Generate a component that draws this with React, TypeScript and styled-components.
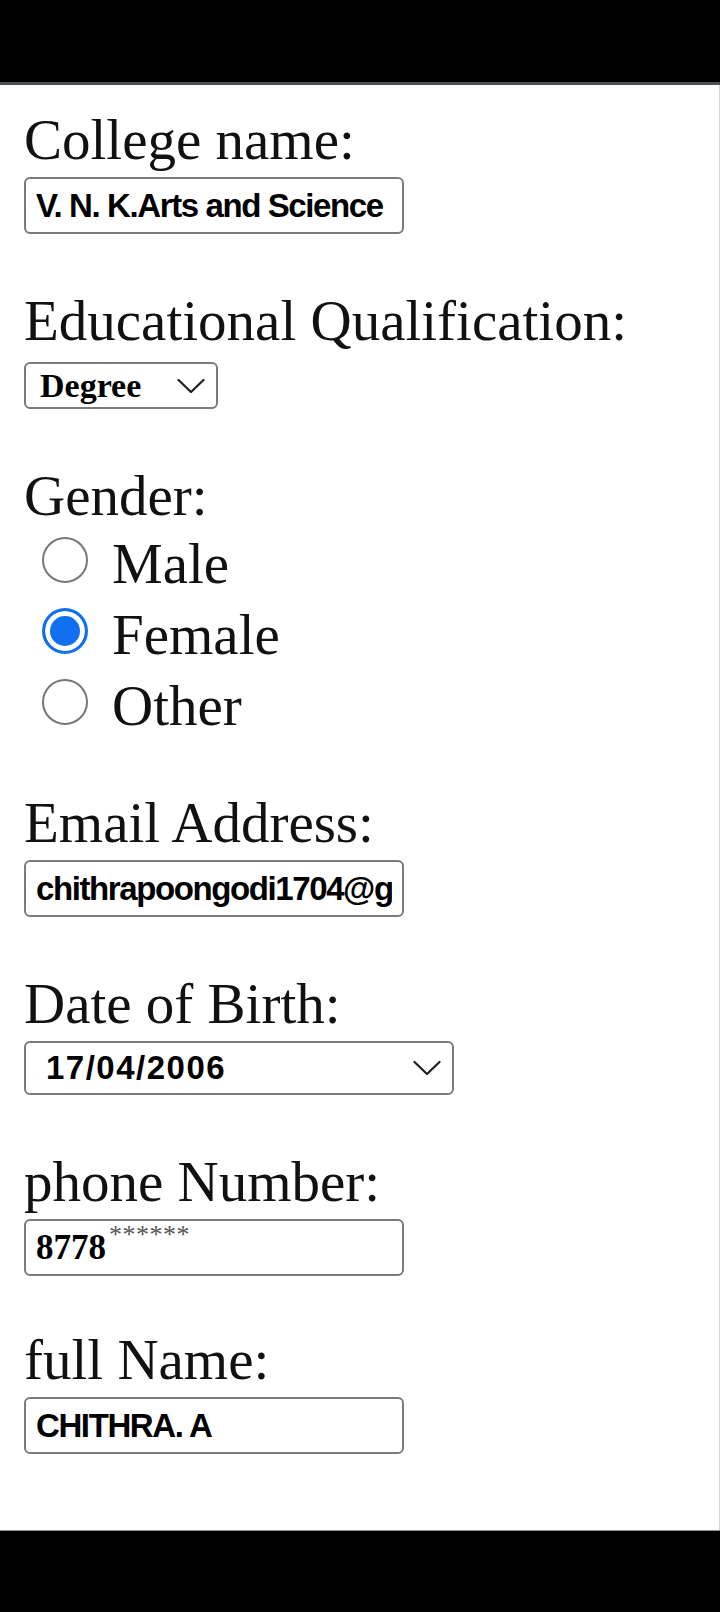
import React from "react";
import styled, { createGlobalStyle, css } from "styled-components";

const GlobalStyle = createGlobalStyle`
  html, body { margin: 0; padding: 0; background: #fff; }
  body { font-family: "Liberation Serif", serif; color: #111; }
  * { box-sizing: border-box; }
`;

const Screen = styled.div`
  display: flex;
  flex-direction: column;
  width: 720px;
  height: 1612px;
  overflow: hidden;
`;

const StatusBar = styled.div`
  flex: none;
  height: 85px;
  background: #000;
  border-bottom: 3px solid #4b4f59;
`;

const NavBar = styled.div`
  flex: none;
  height: 82px;
  background: #000;
  border-top: 1px solid #8c8c8c;
`;

const Form = styled.form`
  flex: 1;
  display: flex;
  flex-direction: column;
  align-items: flex-start;
  padding: 23px 24px 0;
  background: #fff;
  border-right: 1px solid #d2d2d2;
`;

const Field = styled.div<{ $after?: number }>`
  display: flex;
  flex-direction: column;
  align-items: flex-start;
  margin-bottom: ${(p) => p.$after ?? 55}px;
`;

const Label = styled.label<{ $tight?: boolean }>`
  font-family: "Liberation Serif", serif;
  font-size: 57px;
  line-height: 64px;
  color: #111;
  margin-bottom: ${(p) => (p.$tight ? 0 : 5)}px;
`;

const boxBase = css`
  border: 2px solid #7b7b7b;
  border-radius: 6px;
  background: #fff;
  color: #000;
`;

const TextInput = styled.input`
  ${boxBase}
  width: 380px;
  height: 57px;
  padding: 0 10px;
  outline: none;
  font-family: "Liberation Sans", "Arial", sans-serif;
  font-weight: 700;
  font-size: 33px;
  letter-spacing: -1.4px;
`;

const PhoneBox = styled.div`
  ${boxBase}
  display: flex;
  align-items: center;
  width: 380px;
  height: 57px;
  padding: 0 10px;
`;

const PhoneDigits = styled.span`
  font-family: "Liberation Serif", serif;
  font-weight: 700;
  font-size: 35px;
  line-height: 40px;
`;

const PhoneMask = styled.span`
  align-self: flex-start;
  margin: 1px 0 0 3px;
  font-family: "Liberation Serif", serif;
  font-size: 26px;
  line-height: 26px;
  letter-spacing: 0.5px;
  color: #555;
`;

const SelectBox = styled.div<{ $w: number; $h: number; $pad: number; $mt?: number }>`
  ${boxBase}
  display: flex;
  align-items: center;
  justify-content: space-between;
  width: ${(p) => p.$w}px;
  height: ${(p) => p.$h}px;
  margin-top: ${(p) => p.$mt ?? 0}px;
  padding: 0 11px 0 ${(p) => p.$pad}px;
`;

const SerifValue = styled.span`
  font-family: "Liberation Serif", serif;
  font-weight: 700;
  font-size: 34px;
  line-height: 40px;
`;

const DateValue = styled.span`
  font-family: "Liberation Sans", sans-serif;
  font-weight: 700;
  font-size: 33px;
  letter-spacing: 1.5px;
  line-height: 40px;
`;

const RadioGroup = styled.div`
  display: flex;
  flex-direction: column;
`;

const RadioRow = styled.label`
  display: flex;
  align-items: center;
  height: 71px;
  padding-left: 18px;
  gap: 24px;
`;

const RadioInput = styled.input.attrs({ type: "radio" })`
  appearance: none;
  -webkit-appearance: none;
  flex: none;
  width: 46px;
  height: 46px;
  margin: 0 0 8px;
  border-radius: 50%;
  border: 2.5px solid #777;
  background: #fff;
  &:checked {
    border: 3px solid #1170f0;
    background: #1170f0;
    box-shadow: inset 0 0 0 5px #fff;
  }
`;

const RadioText = styled.span`
  font-family: "Liberation Serif", serif;
  font-size: 57px;
  line-height: 71px;
  color: #111;
`;

const Chevron = () => (
  <svg width="28" height="16" viewBox="0 0 28 16" aria-hidden="true">
    <polyline points="1.5,2 14,14 26.5,2" fill="none" stroke="#222" strokeWidth="2.3" strokeLinecap="round" strokeLinejoin="round" />
  </svg>
);

export default function App() {
  return (
    <>
      <GlobalStyle />
      <Screen>
        <StatusBar />
        <Form onSubmit={(e) => e.preventDefault()}>
          <Field>
            <Label htmlFor="college">College name:</Label>
            <TextInput id="college" readOnly defaultValue="V. N. K.Arts and Science" />
          </Field>

          <Field>
            <Label>Educational Qualification:</Label>
            <SelectBox $w={194} $h={47} $pad={14} $mt={4}>
              <SerifValue>Degree</SerifValue>
              <Chevron />
            </SelectBox>
          </Field>

          <Field $after={50}>
            <Label as="div" $tight>Gender:</Label>
            <RadioGroup>
              <RadioRow>
                <RadioInput name="gender" value="male" />
                <RadioText>Male</RadioText>
              </RadioRow>
              <RadioRow>
                <RadioInput name="gender" value="female" defaultChecked />
                <RadioText>Female</RadioText>
              </RadioRow>
              <RadioRow>
                <RadioInput name="gender" value="other" />
                <RadioText>Other</RadioText>
              </RadioRow>
            </RadioGroup>
          </Field>

          <Field>
            <Label htmlFor="email">Email Address:</Label>
            <TextInput id="email" readOnly defaultValue="chithrapoongodi1704@gmail.com" />
          </Field>

          <Field>
            <Label>Date of Birth:</Label>
            <SelectBox $w={430} $h={54} $pad={20}>
              <DateValue>17/04/2006</DateValue>
              <Chevron />
            </SelectBox>
          </Field>

          <Field $after={52}>
            <Label>phone Number:</Label>
            <PhoneBox>
              <PhoneDigits>8778</PhoneDigits>
              <PhoneMask>******</PhoneMask>
            </PhoneBox>
          </Field>

          <Field>
            <Label htmlFor="fullname">full Name:</Label>
            <TextInput id="fullname" readOnly defaultValue="CHITHRA. A" />
          </Field>
        </Form>
        <NavBar />
      </Screen>
    </>
  );
}
